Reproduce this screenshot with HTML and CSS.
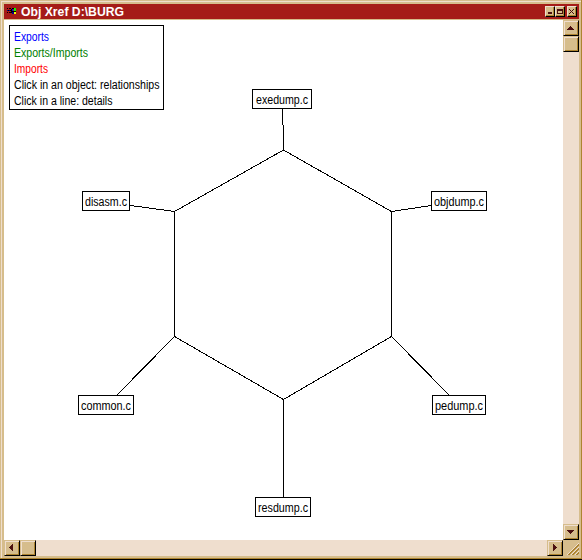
FILE: index.html
```html
<!DOCTYPE html>
<html lang="en">
<head>
<meta charset="utf-8">
<title>Obj Xref D:\BURG</title>
<link rel="stylesheet" href="styles.css">
</head>
<body>
<div class="window">
  <div class="frame">
    <header class="titlebar">
      <svg class="app-icon" width="10" height="8" viewBox="0 0 10 8" shape-rendering="crispEdges">
        <path fill="#000" d="M0 0h1v1H0zM2 0h2v1H2zM0 4h1v1H0zM2 4h2v1H2zM1 2h1v1H1zM3 2h1v1H3zM4 1h1v4H4zM5 0h2v1H5zM5 3h4v1H5zM7 0h1v6H7z"/>
        <path fill="#00008b" d="M0 2h1v1H0zM2 2h1v1H2zM5 4h2v2H5z"/>
        <path fill="#00f" d="M5 1h1v2H5z"/>
        <path fill="#0f0" d="M7 0h2v3H7z"/>
        <path fill="#ff0" d="M7 4h2v2H7z"/>
      </svg>
      <svg class="title" width="120" height="15"><text x="0" y="12" textLength="103" lengthAdjust="spacingAndGlyphs">Obj Xref D:\BURG</text></svg>
      <div class="controls">
        <button class="ctl" aria-label="Minimize"><svg width="7" height="7" shape-rendering="crispEdges"><path d="M2 4h4v2H2z"/></svg></button>
        <button class="ctl" aria-label="Maximize"><svg width="7" height="7" shape-rendering="crispEdges"><path fill-rule="evenodd" d="M1 1h6v5H1zM2 3v2h4V3z"/></svg></button>
        <button class="ctl close" aria-label="Close"><svg width="7" height="7" shape-rendering="crispEdges"><path d="M1 1h1v1H1zM5 1h1v1H5zM2 2h1v1H2zM4 2h1v1H4zM3 3h1v1H3zM2 4h1v1H2zM4 4h1v1H4zM1 5h1v1H1zM5 5h1v1H5z"/></svg></button>
      </div>
    </header>
    <main class="content">
      <svg class="canvas" width="559" height="520" viewBox="4 20 559 520">
        <g class="links">
          <path d="M283.5 150L391.5 211.5V336.5L283.5 399.5L174.5 336.5V211.5Z"/>
          <path d="M282.5 109V125M283.5 125V150.5M130.5 205.5L174.5 211.5M391.5 211.5L431.5 205.5M174.5 336.5L116.5 395.5M391.5 336.5L449.5 395.5M283.5 399.5V497"/>
        </g>
        <g class="boxes">
          <rect x="9.5" y="25.5" width="154" height="84"/>
          <rect x="252.5" y="89.5" width="59" height="19"/>
          <rect x="82.5" y="191.5" width="47" height="19"/>
          <rect x="431.5" y="191.5" width="55" height="19"/>
          <rect x="78.5" y="395.5" width="55" height="19"/>
          <rect x="432.5" y="395.5" width="53" height="19"/>
          <rect x="255.5" y="497.5" width="55" height="19"/>
        </g>
        <g class="labels">
          <text class="exports" x="14" y="41" textLength="35" lengthAdjust="spacingAndGlyphs">Exports</text>
          <text class="both" x="14" y="57" textLength="74" lengthAdjust="spacingAndGlyphs">Exports/Imports</text>
          <text class="imports" x="14" y="73" textLength="34" lengthAdjust="spacingAndGlyphs">Imports</text>
          <text x="14" y="89" textLength="145.5" lengthAdjust="spacingAndGlyphs">Click in an object: relationships</text>
          <text x="14" y="105" textLength="98.5" lengthAdjust="spacingAndGlyphs">Click in a line: details</text>
          <text x="256" y="104" textLength="52" lengthAdjust="spacingAndGlyphs">exedump.c</text>
          <text x="85" y="206" textLength="42" lengthAdjust="spacingAndGlyphs">disasm.c</text>
          <text x="434" y="206" textLength="50" lengthAdjust="spacingAndGlyphs">objdump.c</text>
          <text x="81" y="410" textLength="50" lengthAdjust="spacingAndGlyphs">common.c</text>
          <text x="435" y="410" textLength="48" lengthAdjust="spacingAndGlyphs">pedump.c</text>
          <text x="258" y="512" textLength="50" lengthAdjust="spacingAndGlyphs">resdump.c</text>
        </g>
      </svg>
      <div class="scroll vertical">
        <div class="btn"><svg width="13" height="13" shape-rendering="crispEdges"><path d="M6 5h1v1H6zM5 6h3v1H5zM4 7h5v1H4zM3 8h7v1H3z"/></svg></div>
        <div class="btn"></div>
        <div class="track"></div>
        <div class="btn"><svg width="13" height="13" shape-rendering="crispEdges"><path d="M3 5h7v1H3zM4 6h5v1H4zM5 7h3v1H5zM6 8h1v1H6z"/></svg></div>
      </div>
      <div class="scroll">
        <div class="btn"><svg width="13" height="13" shape-rendering="crispEdges"><path d="M4 6h1v1H4zM5 5h1v3H5zM6 4h1v5H6zM7 3h1v7H7z"/></svg></div>
        <div class="btn"></div>
        <div class="track"></div>
        <div class="btn"><svg width="13" height="13" shape-rendering="crispEdges"><path d="M5 3h1v7H5zM6 4h1v5H6zM7 5h1v3H7zM8 6h1v1H8z"/></svg></div>
      </div>
      <svg class="grip" width="16" height="16" shape-rendering="crispEdges">
        <path class="lit" d="M3.5 15.5L15.5 3.5M7.5 15.5L15.5 7.5M11.5 15.5L15.5 11.5"/>
        <path class="dim" d="M4.5 15.5L15.5 4.5M5.5 15.5L15.5 5.5M8.5 15.5L15.5 8.5M9.5 15.5L15.5 9.5M12.5 15.5L15.5 12.5M13.5 15.5L15.5 13.5"/>
      </svg>
    </main>
  </div>
</div>
</body>
</html>
```

FILE: styles.css
```css
* { box-sizing: border-box; }
body { margin: 0; background: #000; overflow: hidden; font-family: "Liberation Sans", Arial, sans-serif; }
.window {
  width: 582px;
  height: 560px;
  background: #d6bd8c;
  border-bottom: 1px solid #000;
}
.frame {
  height: 559px;
  padding: 4px 3px 3px 4px;
  box-shadow: inset -1px -1px #ad8431, inset 1px 1px #d6bd8c, inset 2px 2px #efdece;
}
.titlebar {
  display: flex;
  height: 15px;
  width: 575px;
  background: #a51c18;
}
.app-icon { margin: 4px 0 0 3px; }
.title { margin-left: 4px; fill: #fff; font-size: 12.5px; font-weight: bold; }
.controls { display: flex; margin: 2px 2px 0 auto; }
.ctl {
  display: block;
  width: 10px;
  height: 11px;
  padding: 0;
  border: 1px solid;
  border-color: #efdece #000 #000 #efdece;
  box-shadow: inset -1px -1px #ad8431;
  background: #d6bd8c;
  line-height: 0;
}
.ctl.close { margin-left: 2px; }
.ctl svg, .btn svg { display: block; fill: #4a1010; }
.content {
  display: grid;
  grid-template: 520px 16px / 559px 16px;
  margin-top: 1px;
}
.canvas { display: block; background: #fff; }
.links, .boxes { fill: none; stroke: #000; stroke-width: 1; shape-rendering: crispEdges; }
.labels { font-size: 12px; fill: #000; }
.exports { fill: #00f; }
.both { fill: #008000; }
.imports { fill: #f00; }
.scroll { display: flex; background: #efdece; }
.vertical { flex-direction: column; }
.track { flex: 1; }
.btn {
  width: 16px;
  height: 16px;
  border: 1px solid;
  border-color: #d6bd8c #000 #000 #d6bd8c;
  background: #d6bd8c;
  box-shadow: inset 1px 1px #efdece, inset -1px -1px #ad8431;
}
.grip { display: block; fill: none; }
.lit { stroke: #efdece; }
.dim { stroke: #ad8431; }
```
